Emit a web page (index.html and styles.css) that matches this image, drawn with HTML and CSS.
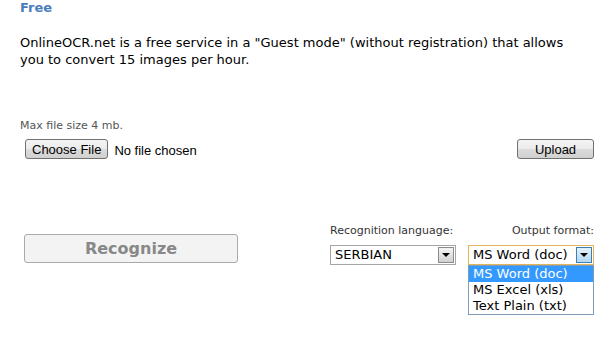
FILE: index.html
```html
<!DOCTYPE html>
<html lang="en">
<head>
    <meta charset="UTF-8">
    <title>OnlineOCR.net - Free</title>
    <link rel="stylesheet" href="styles.css">
</head>
<body>
    <div class="ocr-page">
        <h2 class="ocr-title">Free</h2>
        <p class="ocr-intro">OnlineOCR.net is a free service in a "Guest mode" (without registration) that allows you to convert 15 images per hour.</p>

        <!-- Загрузка файла -->
        <div class="upload-block">
            <div class="hint">Max file size 4 mb.</div>
            <div class="upload-row">
                <div class="file-pick">
                    <button class="sys-button">Choose File</button>
                    <span class="file-name">No file chosen</span>
                </div>
                <button class="sys-button upload-button">Upload</button>
            </div>
        </div>

        <!-- Распознавание -->
        <div class="recognize-row">
            <button class="recognize-button" disabled>Recognize</button>
            <div class="fields">
                <div class="field">
                    <div class="field-label">Recognition language:</div>
                    <div class="dropdown">
                        <span class="dropdown-value">SERBIAN</span>
                        <span class="dropdown-arrow"></span>
                    </div>
                </div>
                <div class="field field-right">
                    <div class="field-label">Output format:</div>
                    <div class="dropdown open">
                        <span class="dropdown-value">MS Word (doc)</span>
                        <span class="dropdown-arrow"></span>
                    </div>
                    <!-- открытый список -->
                    <div class="dropdown-list">
                        <div class="dropdown-item selected">MS Word (doc)</div>
                        <div class="dropdown-item">MS Excel (xls)</div>
                        <div class="dropdown-item">Text Plain (txt)</div>
                    </div>
                </div>
            </div>
        </div>
    </div>
</body>
</html>
```

FILE: styles.css
```css
body {
    margin: 0;
    background: #fff;
    font-family: Verdana, "DejaVu Sans", sans-serif;
    font-size: 13px;
    color: #000;
}
.ocr-page {
    width: 574px;
    padding: 0 21px 0 20px;
}
.ocr-title {
    margin: 0;
    font-size: 13px;
    line-height: 16px;
    font-weight: bold;
    color: #4a7eba;
}
.ocr-intro {
    margin: 18px 0 0;
    max-width: 560px;
    line-height: 17px;
}
.upload-block {
    margin-top: 51px;
}
.hint {
    font-size: 11px;
    line-height: 14px;
    color: #555;
}
.upload-row {
    margin-top: 6px;
    display: flex;
    justify-content: space-between;
    align-items: center;
}
.file-pick {
    display: flex;
    align-items: center;
    padding-left: 5px;
}
.sys-button {
    font-family: "Liberation Sans", Arial, sans-serif;
    font-size: 13px;
    height: 20px;
    padding: 0 6px;
    border: 1px solid #707070;
    border-radius: 3px;
    background: linear-gradient(#f4f4f4, #ebebeb 50%, #dcdcdc 51%, #d0d0d0);
    color: #000;
}
.file-name {
    margin-left: 6px;
    margin-top: 2px;
    font-family: "Liberation Sans", Arial, sans-serif;
    font-size: 13px;
}
.upload-button {
    width: 77px;
}
.recognize-row {
    margin-top: 65px;
    display: flex;
    justify-content: space-between;
    align-items: flex-start;
}
.recognize-button {
    margin: 10px 0 0 4px;
    width: 214px;
    height: 29px;
    border: 1px solid #aaa;
    border-radius: 3px;
    background: #f3f3f3;
    font-family: Verdana, "DejaVu Sans", sans-serif;
    font-size: 16px;
    font-weight: bold;
    color: #888;
}
.fields {
    display: flex;
    gap: 12px;
}
.field {
    width: 126px;
}
.field-right {
    text-align: right;
}
.field-label {
    font-size: 11px;
    line-height: 14px;
    color: #333;
    margin-bottom: 7px;
    white-space: nowrap;
}
.dropdown {
    height: 20px;
    box-sizing: border-box;
    border: 1px solid #a5a5a5;
    display: flex;
    align-items: center;
    justify-content: space-between;
    text-align: left;
    background: #fff;
}
.dropdown-value {
    padding-left: 4px;
    line-height: 18px;
}
.dropdown-arrow {
    position: relative;
    width: 16px;
    height: 16px;
    margin-right: 1px;
    box-sizing: border-box;
    border: 1px solid #8c8c8c;
    background: linear-gradient(#f4f4f4, #d0d0d0);
}
.dropdown-arrow::after {
    content: "";
    position: absolute;
    left: 3px;
    top: 5px;
    border-left: 4px solid transparent;
    border-right: 4px solid transparent;
    border-top: 4px solid #000;
}
.dropdown.open {
    border-color: #e2b55a;
}
.dropdown.open .dropdown-arrow {
    border-color: #3c7fb1;
    background: linear-gradient(#e3f1fc, #b3d8f5);
}
.dropdown-list {
    text-align: left;
    border: 1px solid #7f9db9;
    background: #fff;
}
.dropdown-item {
    height: 16px;
    line-height: 16px;
    padding-left: 4px;
    white-space: nowrap;
}
.dropdown-item.selected {
    background: #3399ff;
    color: #fff;
}
```
